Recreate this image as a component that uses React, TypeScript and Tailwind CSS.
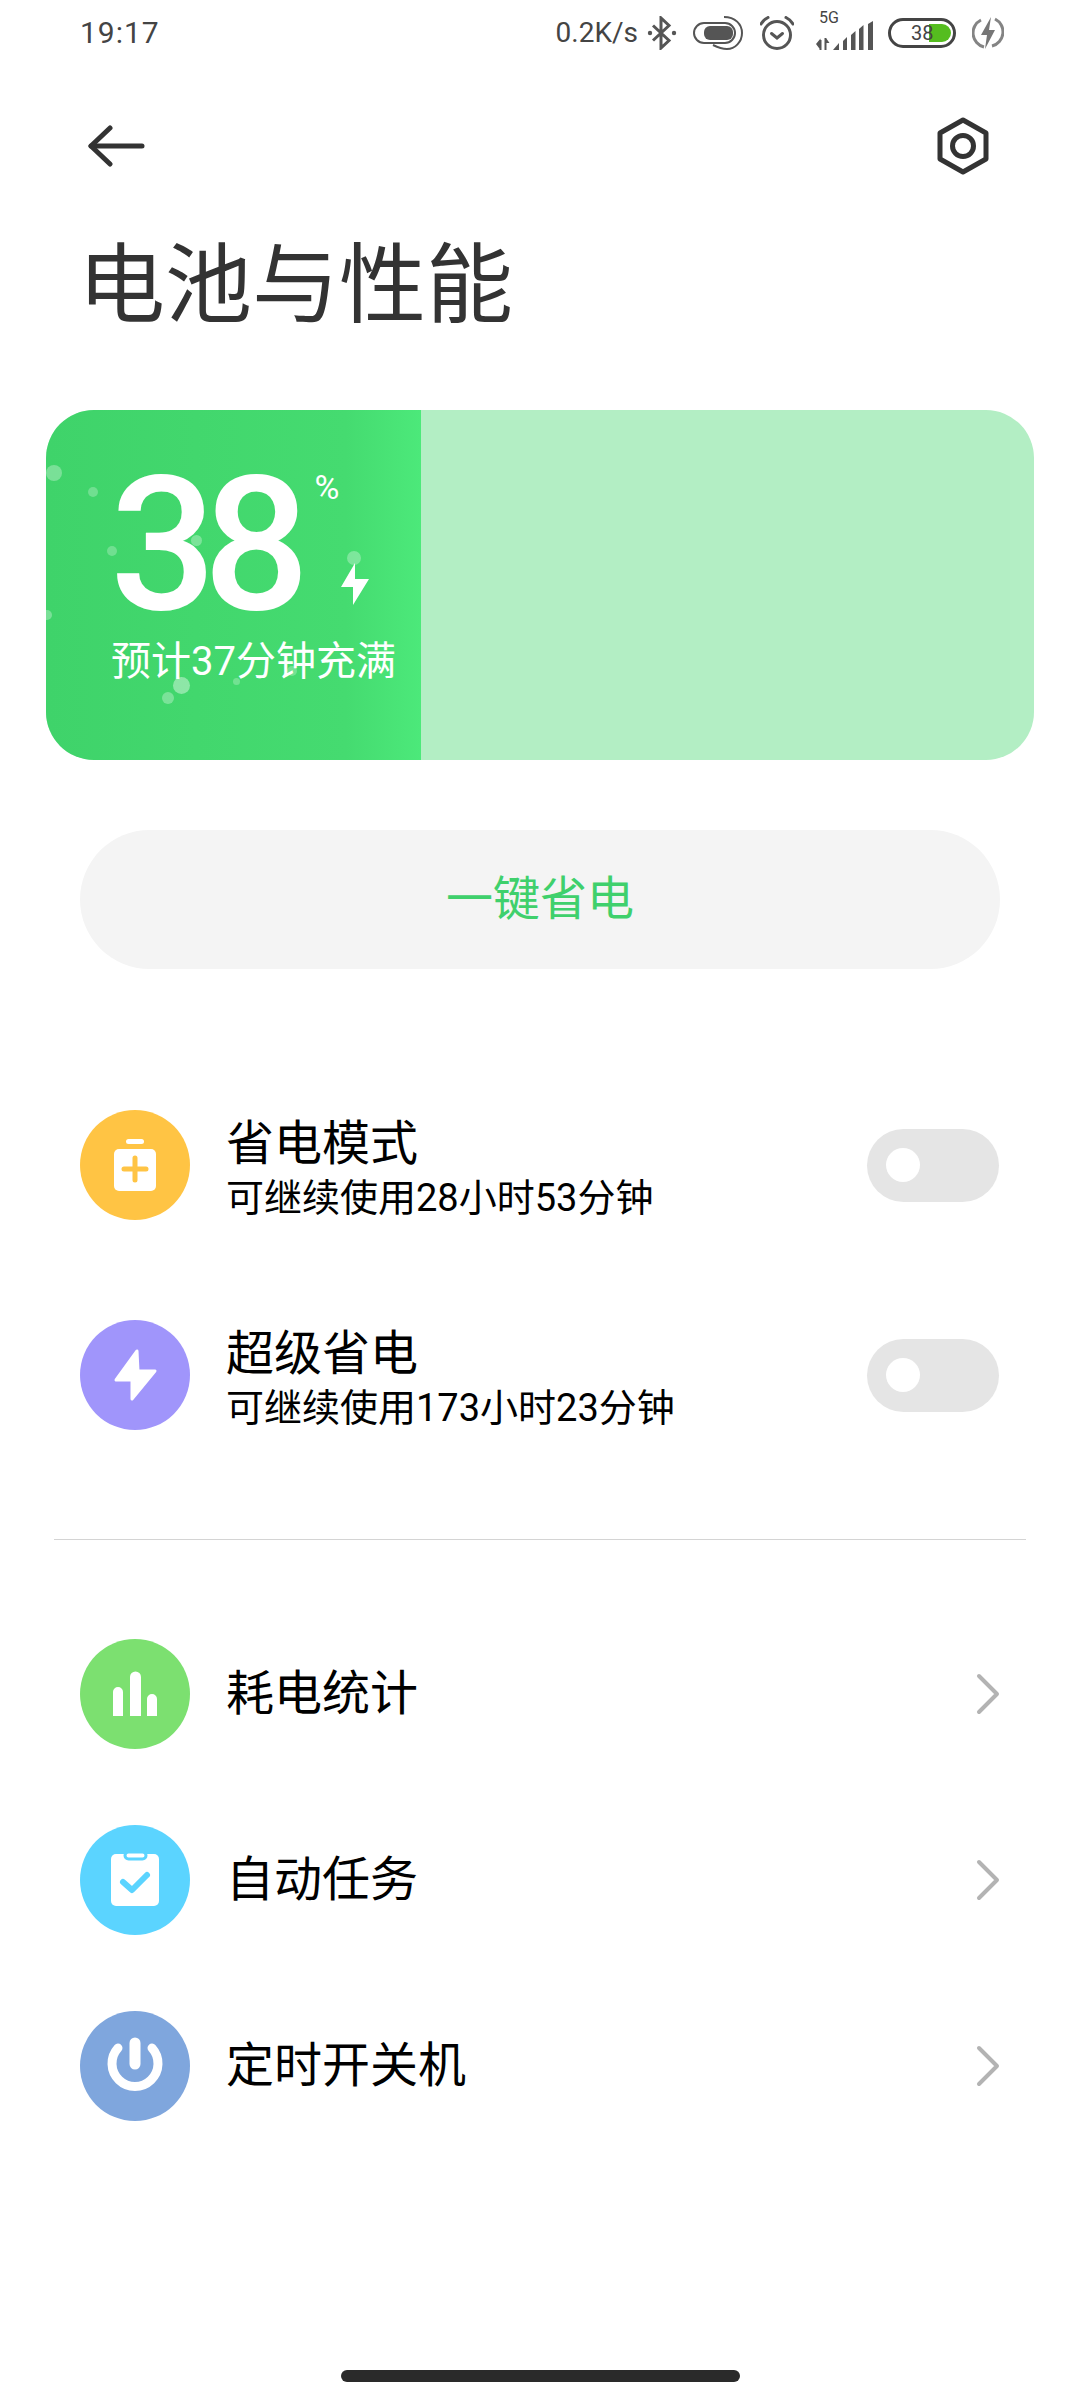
const FONT = "font-['Roboto','Noto_Sans_CJK_SC',sans-serif]";

const bubbles = [
  "left-[0px] top-[55px] w-[16px] h-[16px] bg-white/30",
  "left-[42px] top-[77px] w-[10px] h-[10px] bg-white/25",
  "left-[61px] top-[136px] w-[10px] h-[10px] bg-white/25",
  "left-[145px] top-[125px] w-[11px] h-[11px] bg-white/30",
  "left-[301px] top-[141px] w-[14px] h-[14px] bg-white/30",
  "left-[-4px] top-[200px] w-[10px] h-[10px] bg-white/30",
  "left-[127px] top-[267px] w-[17px] h-[17px] bg-white/40",
  "left-[116px] top-[282px] w-[12px] h-[12px] bg-white/30",
  "left-[187px] top-[268px] w-[7px] h-[7px] bg-white/25",
  "left-[241px] top-[256px] w-[10px] h-[10px] bg-white/25",
];

function StatusBar() {
  return (
    <div className="h-[66px] flex items-center justify-between pl-[80px] pr-[76px] text-[#444]">
      <span className="text-[30px] tracking-[1px] leading-none">19:17</span>
      <div className="flex items-center">
        <span className="text-[28px] leading-none">0.2K/s</span>
        {/* bluetooth */}
        <svg width="30" height="34" viewBox="0 0 30 34" fill="none" stroke="#555" strokeWidth="3" className="ml-[9px]">
          <path d="M6 9.5 L22 24.5 L14 32 V2 L22 9.5 L6 24.5" />
          <circle cx="3" cy="17" r="2.2" fill="#555" stroke="none" />
          <circle cx="27" cy="17" r="2.2" fill="#555" stroke="none" />
        </svg>
        {/* pill with arc */}
        <svg width="50" height="34" viewBox="0 0 50 34" fill="none" className="ml-[16px]">
          <rect x="1" y="7" width="41" height="20" rx="10" stroke="#555" strokeWidth="2" />
          <rect x="11" y="10" width="29" height="14" rx="6" fill="#555" />
          <path d="M31 1 C42 1 49 8 49 17 C49 26 42 33 34 33 C29 33 24 31 20 29" stroke="#555" strokeWidth="2" />
        </svg>
        {/* alarm */}
        <svg width="34" height="34" viewBox="0 0 34 34" fill="none" stroke="#555" strokeWidth="3" className="ml-[17px]">
          <circle cx="17" cy="19" r="13.5" />
          <path d="M11.5 17.5 L17 22 L22.5 17.5" strokeLinecap="round" />
          <path d="M1 8 C2.5 5 5 3 8 1.5" strokeLinecap="round" />
          <path d="M33 8 C31.5 5 29 3 26 1.5" strokeLinecap="round" />
        </svg>
        {/* 5G + signal */}
        <div className="ml-[22px] relative w-[57px] h-[36px]">
          <span className="absolute left-[3px] top-[-5px] text-[16px] leading-none">5G</span>
          <svg width="57" height="30" viewBox="0 0 57 30" fill="#555" className="absolute left-0 top-[6px]">
            <path d="M3.5 29 V19 H5.5 V29 Z M0 23 L4.5 17.5 L4.5 29 Z" />
            <path d="M8.5 17 H10.5 V29 H8.5 Z M10 17 L13.5 22 H10 Z" />
            <path d="M17 29 L23 22 V29 Z" />
            <path d="M27 20 L31 16 V29 H27 Z" />
            <path d="M35 14 L39.5 10 V29 H35 Z" />
            <path d="M43 8 L47.5 4 V29 H43 Z" />
            <path d="M52 3 L57 0 V29 H52 Z" />
          </svg>
        </div>
        {/* battery */}
        <div className="ml-[15px] relative w-[68px] h-[30px] rounded-full border-[3px] border-[#444]">
          <div className="absolute right-[2px] top-[3px] w-[22px] h-[18px] rounded-r-full rounded-l-[3px] bg-[#55bd1f]" />
          <span className="absolute left-[20px] top-[2px] text-[20px] leading-[20px]">38</span>
        </div>
        {/* charging */}
        <svg width="32" height="34" viewBox="0 0 32 34" fill="none" className="ml-[16px] opacity-80">
          <path d="M9 4 A14.5 14.5 0 0 0 12 31" stroke="#666" strokeWidth="3" />
          <path d="M23 3 A14.5 14.5 0 0 1 20 30" stroke="#666" strokeWidth="3" />
          <path d="M19 1 L9 19 H15 L13 33 L23 14 H17 Z" fill="#555" />
        </svg>
      </div>
    </div>
  );
}

function Toggle() {
  return (
    <div className="w-[132px] h-[73px] rounded-full bg-[#e5e5e5] flex items-center pl-[19px]">
      <div className="w-[34px] h-[34px] rounded-full bg-white" />
    </div>
  );
}

function IconCircle({ color, children }: { color: string; children: React.ReactNode }) {
  return (
    <div className={`w-[110px] h-[110px] rounded-full shrink-0 ${color}`}>
      <svg width="110" height="110" viewBox="0 0 110 110">
        {children}
      </svg>
    </div>
  );
}

function ModeRow(props: { icon: React.ReactNode; title: string; sub: string }) {
  return (
    <div className="flex items-center pl-[80px] pr-[81px]">
      {props.icon}
      <div className="ml-[36px] flex-1">
        <div className="text-[48px] leading-[56px] text-black mt-[6px]">{props.title}</div>
        <div className="text-[38px] leading-[44px] text-black mt-[4px]">{props.sub}</div>
      </div>
      <Toggle />
    </div>
  );
}

function LinkRow(props: { icon: React.ReactNode; title: string }) {
  return (
    <div className="flex items-center pl-[80px] pr-[80px]">
      {props.icon}
      <div className="ml-[36px] flex-1 text-[48px] leading-[56px] text-black">{props.title}</div>
      <svg width="24" height="42" viewBox="0 0 24 42" fill="none" stroke="#b3b3b3" strokeWidth="4" strokeLinecap="round" strokeLinejoin="round">
        <path d="M3 3 L21 21 L3 39" />
      </svg>
    </div>
  );
}

export default function App() {
  return (
    <div className={`w-[1080px] h-[2400px] bg-white flex flex-col ${FONT}`}>
      <StatusBar />

      {/* Nav */}
      <div className="h-[108px] mt-[26px] flex items-center justify-between pl-[88px] pr-[90px]">
        <svg width="57" height="42" viewBox="0 0 57 42" fill="none" stroke="#333" strokeWidth="5" strokeLinecap="round" strokeLinejoin="round">
          <path d="M3 21 H54" />
          <path d="M22 3 L3 21 L22 39" />
        </svg>
        <svg width="54" height="58" viewBox="0 0 54 58" fill="none" stroke="#333" strokeWidth="5" strokeLinejoin="round">
          <path d="M27 3 L50 16 V42 L27 55 L4 42 V16 Z" />
          <circle cx="27" cy="29" r="10.5" />
        </svg>
      </div>

      {/* Title */}
      <h1 className="ml-[78px] mt-[31px] text-[87px] leading-[110px] font-normal text-[#333]">电池与性能</h1>

      {/* Battery card */}
      <div className="mt-[69px] mx-[46px] h-[350px] rounded-[48px] overflow-hidden bg-[#b3eec4] relative">
        <div className="w-[375px] h-full bg-linear-to-r from-[#3fd36a] via-[#45db70] via-80% to-[#4ce97a] relative pl-[64px] pt-[46px]">
          {bubbles.map((b) => (
            <div key={b} className={`absolute rounded-full ${b}`} />
          ))}
          <div className="relative flex text-white">
            <span className="text-[187px] leading-[180px] font-medium tracking-[-13px]">38</span>
            <div className="ml-[18px] flex flex-col">
              <span className="text-[34px] leading-[32px] mt-[15px]">%</span>
              <svg width="28" height="42" viewBox="0 0 28 42" fill="white" className="ml-[26px] mt-[60px]">
                <path d="M14 0 L0 24 H12 V42 L28 16 H14 Z" />
              </svg>
            </div>
          </div>
          <div className="relative mt-[2px] ml-[1px] text-[40px] leading-[48px] text-white whitespace-nowrap">预计37分钟充满</div>
        </div>
      </div>

      {/* Save button */}
      <div className="mt-[70px] mx-[80px] h-[139px] rounded-full bg-[#f4f4f4] flex items-center justify-center text-[47px] text-[#3fd06c]">
        一键省电
      </div>

      {/* Modes */}
      <div className="mt-[141px] flex flex-col gap-[100px]">
        <ModeRow
          title="省电模式"
          sub="可继续使用28小时53分钟"
          icon={
            <IconCircle color="bg-[#ffc444]">
              <rect x="46" y="29" width="18" height="5" rx="2.5" fill="white" />
              <rect x="34" y="39" width="42" height="42" rx="5" fill="white" />
              <path d="M44 59 H66 M55 48 V70" stroke="#ffc444" strokeWidth="5" strokeLinecap="round" />
            </IconCircle>
          }
        />
        <ModeRow
          title="超级省电"
          sub="可继续使用173小时23分钟"
          icon={
            <IconCircle color="bg-[#a095fb]">
              <path d="M57 31 L36 60 H52 V79 L75 51 H58 Z" fill="white" stroke="white" strokeWidth="3" strokeLinejoin="round" />
            </IconCircle>
          }
        />
      </div>

      <div className="mt-[109px] mx-[54px] h-[1px] bg-[#d4d4d4]" />

      {/* Links */}
      <div className="mt-[99px] flex flex-col gap-[76px]">
        <LinkRow
          title="耗电统计"
          icon={
            <IconCircle color="bg-[#7ce070]">
              <path d="M33 77 V53 A5 5 0 0 1 43 53 V77 Z M50 77 V38 A5.5 5.5 0 0 1 61 38 V77 Z M67 77 V60 A5 5 0 0 1 77 60 V77 Z" fill="white" />
            </IconCircle>
          }
        />
        <LinkRow
          title="自动任务"
          icon={
            <IconCircle color="bg-[#5bd4ff]">
              <rect x="31" y="29" width="48" height="52" rx="5" fill="white" />
              <rect x="45" y="27" width="21" height="7" rx="3.5" fill="white" stroke="#5bd4ff" strokeWidth="3" />
              <path d="M43 57 L52 65 L67 50" fill="none" stroke="#5bd4ff" strokeWidth="6" strokeLinecap="round" strokeLinejoin="round" />
            </IconCircle>
          }
        />
        <LinkRow
          title="定时开关机"
          icon={
            <IconCircle color="bg-[#7fa6dd]">
              <path d="M38 37 A23 23 0 1 0 72 37" fill="none" stroke="white" strokeWidth="9" strokeLinecap="round" />
              <path d="M55 32 V53" fill="none" stroke="white" strokeWidth="11" strokeLinecap="round" />
            </IconCircle>
          }
        />
      </div>

      {/* Home indicator */}
      <div className="mt-auto mb-[18px] self-center w-[399px] h-[12px] rounded-full bg-[#2a2a2a]" />
    </div>
  );
}
